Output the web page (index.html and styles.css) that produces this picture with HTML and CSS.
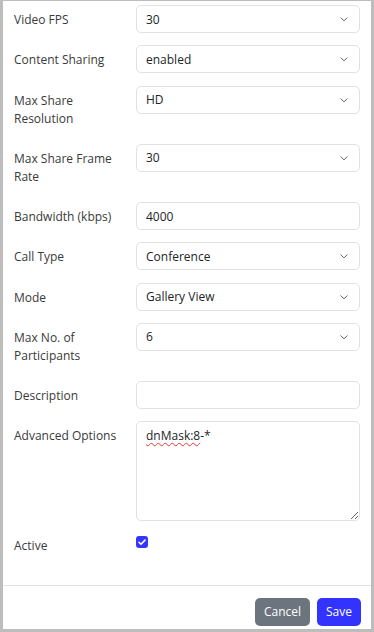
FILE: index.html
```html
<!DOCTYPE html>
<html lang="en">
<head>
    <meta charset="UTF-8">
    <meta name="viewport" content="width=device-width, initial-scale=1.0">
    <title>Edit Room Profile</title>
    <link rel="stylesheet" href="styles.css">
</head>
<body>
    <div class="modal">
        <form class="modal-body">
            <div class="row">
                <label class="col-label">Video FPS</label>
                <div class="select-wrap">
                    <select class="form-select"><option>30</option></select>
                    <svg class="chevron" viewBox="0 0 16 16"><path d="M3 6l5 5 5-5"/></svg>
                </div>
            </div>
            <div class="row">
                <label class="col-label">Content Sharing</label>
                <div class="select-wrap">
                    <select class="form-select"><option>enabled</option></select>
                    <svg class="chevron" viewBox="0 0 16 16"><path d="M3 6l5 5 5-5"/></svg>
                </div>
            </div>
            <div class="row">
                <label class="col-label">Max Share<br>Resolution</label>
                <div class="select-wrap">
                    <select class="form-select"><option>HD</option></select>
                    <svg class="chevron" viewBox="0 0 16 16"><path d="M3 6l5 5 5-5"/></svg>
                </div>
            </div>
            <div class="row">
                <label class="col-label">Max Share Frame<br>Rate</label>
                <div class="select-wrap">
                    <select class="form-select"><option>30</option></select>
                    <svg class="chevron" viewBox="0 0 16 16"><path d="M3 6l5 5 5-5"/></svg>
                </div>
            </div>
            <div class="row">
                <label class="col-label">Bandwidth (kbps)</label>
                <input class="form-control" type="text" value="4000">
            </div>
            <div class="row">
                <label class="col-label">Call Type</label>
                <div class="select-wrap">
                    <select class="form-select"><option>Conference</option></select>
                    <svg class="chevron" viewBox="0 0 16 16"><path d="M3 6l5 5 5-5"/></svg>
                </div>
            </div>
            <div class="row">
                <label class="col-label">Mode</label>
                <div class="select-wrap">
                    <select class="form-select"><option>Gallery View</option></select>
                    <svg class="chevron" viewBox="0 0 16 16"><path d="M3 6l5 5 5-5"/></svg>
                </div>
            </div>
            <div class="row">
                <label class="col-label">Max No. of<br>Participants</label>
                <div class="select-wrap">
                    <select class="form-select"><option>6</option></select>
                    <svg class="chevron" viewBox="0 0 16 16"><path d="M3 6l5 5 5-5"/></svg>
                </div>
            </div>
            <div class="row">
                <label class="col-label">Description</label>
                <input class="form-control" type="text" value="">
            </div>
            <div class="row">
                <label class="col-label">Advanced Options</label>
                <div class="form-control textarea"><span class="misspelled">dnMask:8</span>-*</div>
            </div>
            <div class="row">
                <label class="col-label">Active</label>
                <div class="form-check">
                    <span class="check-box">
                        <svg viewBox="0 0 12 12"><path d="M3 6.3l2 2 4-4.2"/></svg>
                    </span>
                </div>
            </div>
        </form>
        <div class="modal-footer">
            <button type="button" class="btn btn-secondary">Cancel</button>
            <button type="button" class="btn btn-primary">Save</button>
        </div>
    </div>
</body>
</html>
```

FILE: styles.css
```css
body {
    margin: 0;
    background-color: #bdbdbd;
    font-family: 'Open Sans', sans-serif;
    font-size: 12px;
    color: #212529;
}
.modal {
    background: white;
    margin: 1px 3px 0 3px;
    height: 628px;
    overflow: hidden;
}
.modal-body {
    padding: 3px 11px 15px 11px;
}
.row {
    display: grid;
    grid-template-columns: 122px 1fr;
    align-items: start;
    margin-bottom: 8.25px;
}
.col-label {
    padding: 7px 0;
    line-height: 18px;
    color: #3a3a3a;
}
.select-wrap {
    position: relative;
    margin-top: 1px;
}
.form-select,
.form-control {
    display: block;
    width: 100%;
    box-sizing: border-box;
    height: 28px;
    padding: 0 9px;
    font-family: inherit;
    font-size: 12px;
    color: #212529;
    background: white;
    border: 1px solid #dee2e6;
    border-radius: 5px;
    appearance: none;
    outline: none;
}
.form-control {
    margin-top: 1px;
}
.chevron {
    position: absolute;
    right: 11px;
    top: 9px;
    width: 10px;
    height: 10px;
    fill: none;
    stroke: #555;
    stroke-width: 1.5;
    stroke-linecap: round;
    stroke-linejoin: round;
    pointer-events: none;
}
.textarea {
    height: 100px;
    padding: 5px 9px;
    line-height: 18px;
    overflow: auto;
    resize: vertical;
}
.misspelled {
    text-decoration: underline wavy #e33;
    text-decoration-thickness: 1px;
    text-underline-offset: 2px;
}
.form-check {
    padding-top: 6px;
}
.check-box {
    display: block;
    width: 12px;
    height: 12px;
    background: #3535ff;
    border-radius: 3px;
}
.check-box svg {
    display: block;
    width: 12px;
    height: 12px;
    fill: none;
    stroke: white;
    stroke-width: 1.6;
    stroke-linecap: round;
    stroke-linejoin: round;
}
.modal-footer {
    border-top: 1px solid #dee2e6;
    display: flex;
    justify-content: flex-end;
    gap: 7px;
    padding: 12px 10px;
}
.btn {
    height: 28px;
    padding: 0 9px;
    border: none;
    border-radius: 5px;
    color: white;
    font-family: inherit;
    font-size: 12px;
    cursor: pointer;
}
.btn-secondary {
    background-color: #6c757d;
}
.btn-primary {
    background-color: #3333ff;
}
```
